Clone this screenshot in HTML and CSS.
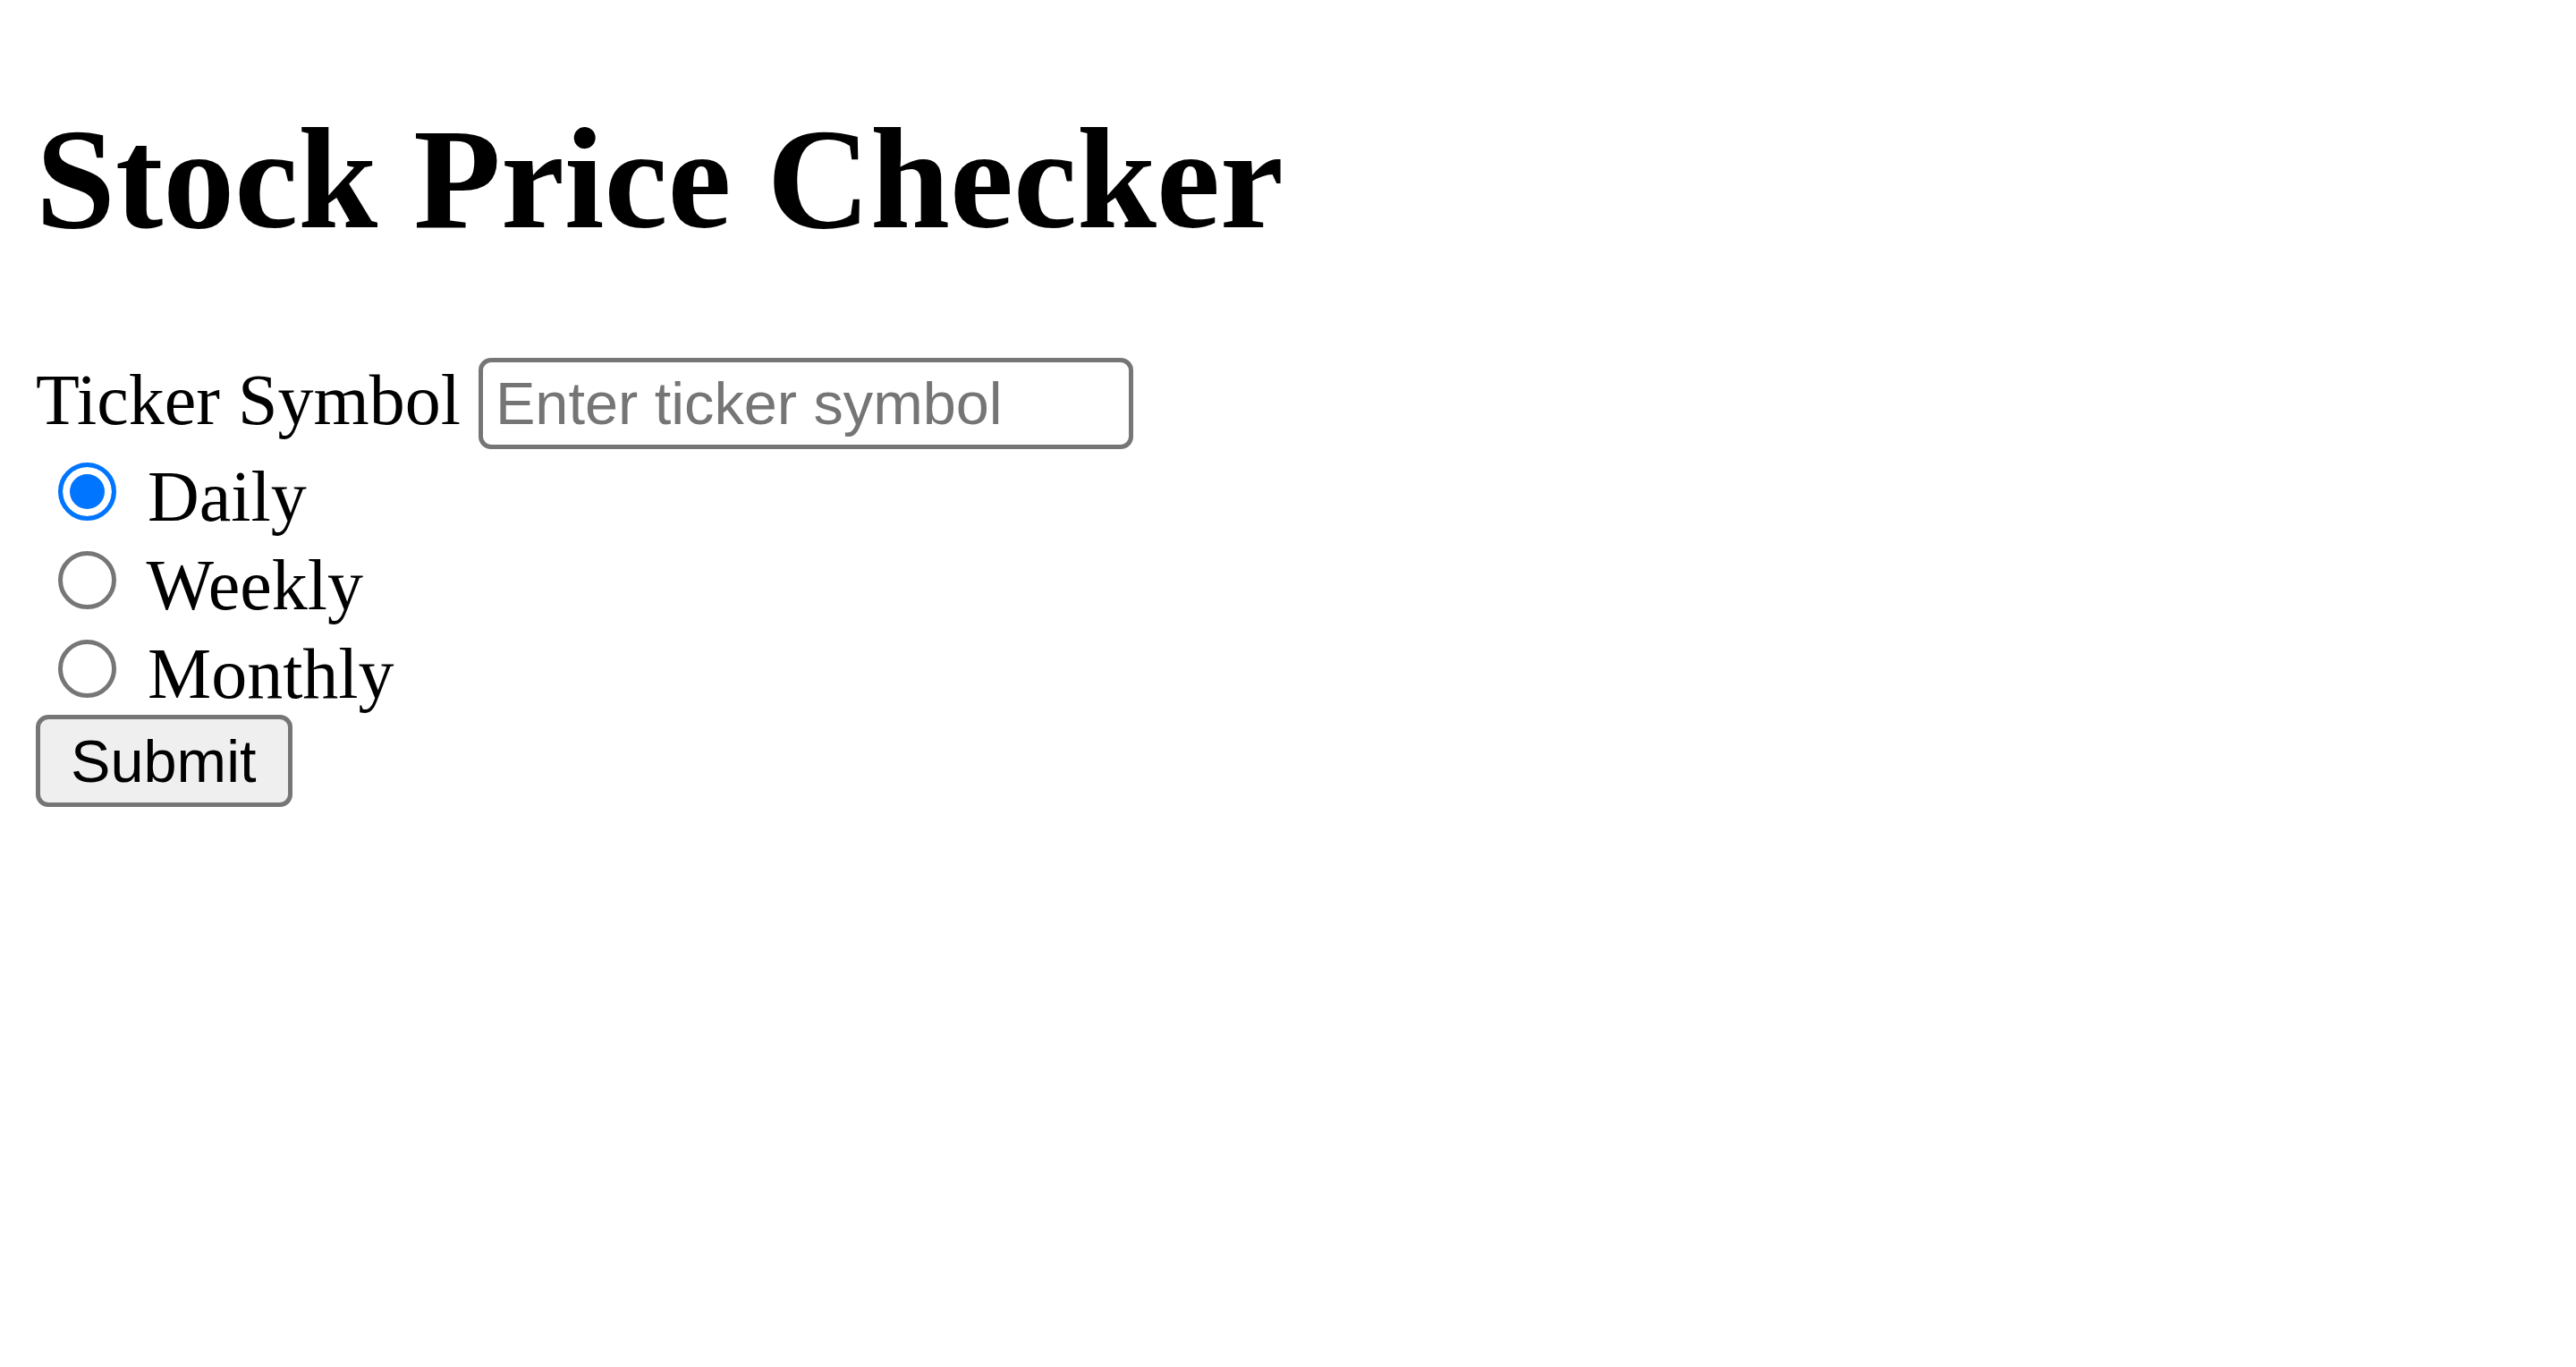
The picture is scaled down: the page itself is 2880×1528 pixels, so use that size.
FILE: index.html
```html
<!DOCTYPE html>
<html lang="en">
<head>
<meta charset="utf-8">
<title>Stock Price Checker</title>
<link rel="stylesheet" href="styles.css">
</head>
<body class="page">
  <h1 class="title">Stock Price Checker</h1>
  <form class="form">
    <div class="row">
      <label class="label" for="ticker">Ticker Symbol</label>
      <input class="ticker" id="ticker" type="text" placeholder="Enter ticker symbol">
    </div>
    <div class="option">
      <input class="radio" type="radio" name="interval" id="daily" checked>
      <label class="label" for="daily">Daily</label>
    </div>
    <div class="option">
      <input class="radio" type="radio" name="interval" id="weekly">
      <label class="label" for="weekly">Weekly</label>
    </div>
    <div class="option">
      <input class="radio" type="radio" name="interval" id="monthly">
      <label class="label" for="monthly">Monthly</label>
    </div>
    <div class="actions">
      <button class="submit" type="submit">Submit</button>
    </div>
  </form>
</body>
</html>
```

FILE: styles.css
```css
html {
  background: #ffffff;
}

.page {
  margin: 40px;
  font-family: "Liberation Serif", "Times New Roman", serif;
  font-size: 80px;
  color: #000000;
}

.title {
  font-size: 160px;
  font-weight: bold;
  margin: 68px 0 107px;
}

.form {
  margin: 0;
}

.label {
  font: inherit;
}

.ticker {
  box-sizing: border-box;
  width: 732px;
  height: 102px;
  margin: 0;
  padding: 5px 14px;
  border: 5px solid #767676;
  border-radius: 14px;
  font-family: "Liberation Sans", Arial, sans-serif;
  font-size: 66.67px;
  color: #000000;
  background: #ffffff;
  outline: none;
}

.ticker::placeholder {
  color: #757575;
}

.radio {
  -webkit-appearance: none;
  appearance: none;
  box-sizing: border-box;
  width: 65px;
  height: 65px;
  margin: 15px 15px 0 25px;
  border: 5px solid #767676;
  border-radius: 50%;
  background: #ffffff;
  vertical-align: baseline;
}

.radio:checked {
  border-color: #0075ff;
  background: #0075ff;
  box-shadow: inset 0 0 0 8px #ffffff;
}

.submit {
  box-sizing: border-box;
  height: 103px;
  margin: 0;
  padding: 5px 36px 5px 34px;
  border: 5px solid #767676;
  border-radius: 14px;
  background: #efefef;
  font-family: "Liberation Sans", Arial, sans-serif;
  font-size: 66.67px;
  color: #000000;
}
```
